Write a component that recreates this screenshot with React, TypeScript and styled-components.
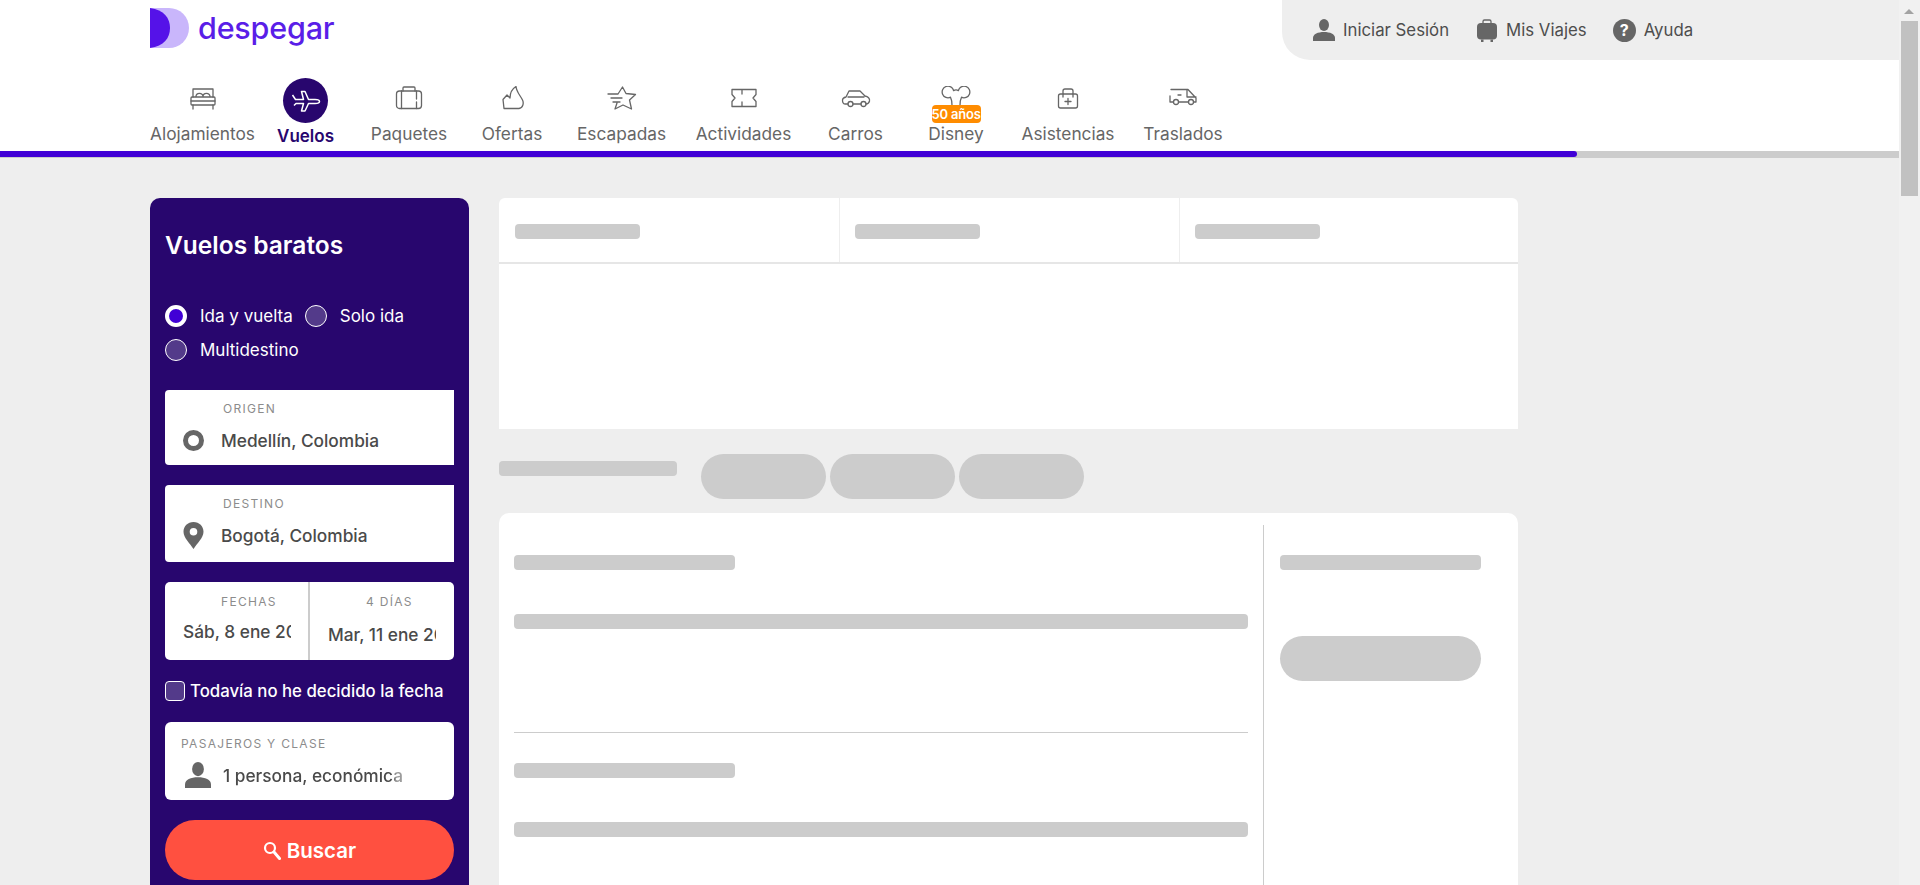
import React from "react";
import styled, { createGlobalStyle } from "styled-components";

const GlobalStyle = createGlobalStyle`
  html {
    scrollbar-width: none;
  }

  body {
    margin: 0;
    background: #eeeeee;
    font-family: Inter, "Noto Sans", "Liberation Sans", sans-serif;
    overflow-x: hidden;
  }

  * {
    box-sizing: border-box;
  }
`;

const Page = styled.div`
  width: calc(100vw - 21px);
  min-height: 100vh;
  background: #eeeeee;
`;

const Header = styled.header`
  background: #ffffff;
`;

const TopRow = styled.div`
  display: flex;
  justify-content: space-between;
  height: 60px;
  padding-left: 150px;
`;

const Logo = styled.a`
  display: flex;
  align-items: flex-start;
  gap: 9px;
  padding-top: 8px;
`;

const LogoText = styled.span`
  margin-top: 2px;
  color: #5a1ee8;
  font-size: 30.5px;
  line-height: 36px;
  font-weight: 500;
  letter-spacing: -0.2px;
`;

const UserPanel = styled.div`
  display: flex;
  align-items: center;
  width: 617px;
  padding-left: 31px;
  background: #eeeeee;
  border-bottom-left-radius: 28px;
`;

const UserLink = styled.a<{ $gap: number }>`
  display: flex;
  align-items: center;
  gap: 8px;
  margin-right: ${(p) => p.$gap}px;
  color: #4d4d4d;
  font-size: 16.8px;
`;

const HelpIcon = styled.span`
  display: flex;
  align-items: center;
  justify-content: center;
  width: 23px;
  height: 23px;
  border-radius: 50%;
  background: #666666;
  color: #ffffff;
  font-size: 16px;
  font-weight: 700;
`;

const Nav = styled.nav`
  display: flex;
  height: 91px;
  padding-left: 150px;
`;

const NavItem = styled.a<{ $width: number }>`
  display: flex;
  flex-direction: column;
  align-items: center;
  width: ${(p) => p.$width}px;
  padding-top: 18px;
`;

const IconSlot = styled.span<{ $active?: boolean }>`
  position: relative;
  display: flex;
  justify-content: center;
  align-items: ${(p) => (p.$active ? "center" : "flex-start")};
  width: 45px;
  height: 45px;
  padding-top: ${(p) => (p.$active ? 0 : 8)}px;
  border-radius: 50%;
  background: ${(p) => (p.$active ? "#28066e" : "transparent")};
`;

const NavLabel = styled.span<{ $active?: boolean }>`
  margin-top: ${(p) => (p.$active ? 3 : 1)}px;
  color: ${(p) => (p.$active ? "#28066e" : "#666666")};
  font-size: ${(p) => (p.$active ? 17 : 17.3)}px;
  line-height: 20px;
  font-weight: ${(p) => (p.$active ? 600 : 400)};
  white-space: nowrap;
`;

const NavBadge = styled.span`
  position: absolute;
  left: -2px;
  top: 27px;
  width: 49px;
  height: 18px;
  border-radius: 4px;
  background: #ff8c00;
  color: #ffffff;
  font-size: 13px;
  line-height: 18px;
  font-weight: 600;
  letter-spacing: -0.2px;
  text-align: center;
  white-space: nowrap;
`;

const LineIcon = styled.svg`
  flex: none;
  fill: none;
  stroke: #666666;
  stroke-width: 1.3;
  stroke-linecap: round;
  stroke-linejoin: round;
`;

const Progress = styled.div`
  height: 7px;
  background: #cccccc;
`;

const ProgressFill = styled.div`
  height: 6px;
  border-radius: 0 3px 3px 0;
  background: #4100d6;
`;

const Main = styled.main`
  display: flex;
  align-items: flex-start;
  gap: 30px;
  padding: 40px 0 0 150px;
`;

const Sidebar = styled.aside`
  flex: none;
  width: 319px;
  padding: 32px 15px 30px;
  border-radius: 10px 10px 0 0;
  background: #28066e;
`;

const SidebarTitle = styled.h1`
  margin: 0;
  color: #ffffff;
  font-size: 24.5px;
  line-height: 30px;
  font-weight: 600;
`;

const RadioGroup = styled.div`
  display: flex;
  flex-wrap: wrap;
  gap: 10px 12px;
  margin-top: 44px;
`;

const RadioItem = styled.label`
  display: flex;
  align-items: center;
  gap: 13px;
  height: 24px;
  color: #ffffff;
  font-size: 17px;
  white-space: nowrap;
`;

const RadioMark = styled.span<{ $checked?: boolean }>`
  width: 22px;
  height: 22px;
  border-radius: 50%;
  border: ${(p) => (p.$checked ? "4px solid #ffffff" : "1px solid #ffffff")};
  background: ${(p) => (p.$checked ? "#4100d6" : "#533a8a")};
`;

const Field = styled.div<{ $height: number; $mt: number }>`
  height: ${(p) => p.$height}px;
  margin-top: ${(p) => p.$mt}px;
  padding-top: 11px;
  border-radius: 4px 0 0 4px;
  background: #ffffff;
`;

const FieldLabel = styled.div<{ $indent: number }>`
  margin-left: ${(p) => p.$indent}px;
  color: #8c8c8c;
  font-size: 12px;
  line-height: 16px;
  letter-spacing: 1.3px;
  white-space: nowrap;
`;

const FieldRow = styled.div`
  display: flex;
  align-items: center;
  gap: 17px;
  height: 28px;
  margin: 9px 0 0 18px;
`;

const FieldValue = styled.div`
  color: #4a4a4a;
  font-size: 17.3px;
  font-weight: 500;
  white-space: nowrap;
`;

const DateBox = styled.div`
  display: grid;
  grid-template-columns: 143px 146px;
  height: 78px;
  margin-top: 20px;
  border-radius: 5px;
  background: #ffffff;
`;

const DateCell = styled.div<{ $right?: boolean }>`
  padding: 12px 0 0 18px;
  border-left: ${(p) => (p.$right ? "2px solid #cccccc" : "none")};
`;

const DateValue = styled(FieldValue)<{ $mt: number }>`
  width: 108px;
  margin-top: ${(p) => p.$mt}px;
  line-height: 24px;
  overflow: hidden;
`;

const CheckRow = styled.label`
  display: flex;
  align-items: center;
  gap: 5px;
  height: 20px;
  margin-top: 21px;
  color: #ffffff;
  font-size: 16.8px;
  font-weight: 500;
  white-space: nowrap;
`;

const CheckMark = styled.span`
  flex: none;
  width: 20px;
  height: 20px;
  border: 1px solid #ffffff;
  border-radius: 4px;
  background: #533a8a;
`;

const PassengerBox = styled.div`
  height: 78px;
  margin-top: 21px;
  padding-top: 14px;
  border-radius: 6px;
  background: #ffffff;
`;

const PassengerRow = styled.div`
  display: flex;
  align-items: center;
  gap: 12px;
  height: 26px;
  margin: 10px 0 0 20px;
`;

const PassengerValue = styled(FieldValue)`
  -webkit-mask-image: linear-gradient(90deg, #000 170px, rgba(0, 0, 0, 0.55) 173px);
  mask-image: linear-gradient(90deg, #000 170px, rgba(0, 0, 0, 0.55) 173px);
`;

const SearchButton = styled.button`
  display: flex;
  align-items: center;
  justify-content: center;
  gap: 6px;
  width: 100%;
  height: 60px;
  margin-top: 20px;
  border: none;
  border-radius: 30px;
  background: #ff5040;
  color: #ffffff;
  font-family: inherit;
  font-size: 20.5px;
  font-weight: 600;
`;

const Content = styled.section`
  flex: none;
  width: 1019px;
`;

const TopCard = styled.div`
  height: 231px;
  border-radius: 6px 6px 0 0;
  background: #ffffff;
`;

const Tabs = styled.div`
  display: grid;
  grid-template-columns: 340px 340px 339px;
  height: 66px;
  border-bottom: 2px solid #e6e6e6;
`;

const Tab = styled.div<{ $first?: boolean }>`
  padding: 26px 0 0 ${(p) => (p.$first ? 16 : 15)}px;
  border-left: ${(p) => (p.$first ? "none" : "1px solid #eeeeee")};
`;

const Bar = styled.div<{ $width: string; $mt?: number }>`
  width: ${(p) => p.$width};
  height: 15px;
  margin-top: ${(p) => p.$mt ?? 0}px;
  border-radius: 4px;
  background: #cccccc;
`;

const Pill = styled.div<{ $width: number; $mt?: number }>`
  flex: none;
  width: ${(p) => p.$width}px;
  height: 45px;
  margin-top: ${(p) => p.$mt ?? 0}px;
  border-radius: 23px;
  background: #cccccc;
`;

const FilterRow = styled.div`
  display: flex;
  align-items: flex-start;
  gap: 4px;
  margin-top: 25px;
`;

const FilterTitle = styled.div`
  flex: none;
  width: 198px;
  padding-top: 7px;
`;

const ResultCard = styled.div`
  display: flex;
  margin-top: 14px;
  padding: 12px 0 0 15px;
  border-radius: 10px 10px 0 0;
  background: #ffffff;
`;

const ResultMain = styled.div`
  flex: none;
  width: 734px;
`;

const ResultRow = styled.div`
  padding: 30px 0 103px;
  border-bottom: 1px solid #cccccc;

  &:last-child {
    border-bottom: none;
  }
`;

const ResultSide = styled.div`
  flex: none;
  width: 218px;
  margin-left: 15px;
  padding: 30px 0 0 16px;
  border-left: 1px solid #cccccc;
`;

const ScrollTrack = styled.div`
  position: fixed;
  top: 0;
  right: 0;
  bottom: 0;
  width: 21px;
  background: #f1f1f1;
`;

const ScrollArrow = styled.div`
  position: absolute;
  top: 9px;
  left: 5px;
  width: 0;
  height: 0;
  border-left: 5.5px solid transparent;
  border-right: 5.5px solid transparent;
  border-bottom: 5px solid #a3a3a3;
`;

const ScrollThumb = styled.div`
  position: absolute;
  top: 21px;
  left: 2px;
  width: 17px;
  height: 175px;
  background: #c1c1c1;
`;

const navItems = [
  {
    label: "Alojamientos",
    width: 105,
    art: (
      <>
        <path d="M5 11V3h20v8" />
        <path d="M8 10.500a3.500 3.200 0 0 1 7 0M15 10.500a3.500 3.200 0 0 1 7 0" />
        <rect x="3" y="11" width="24" height="8" rx="1" />
        <path d="M3 15h24M5 19v4M25 19v4" />
      </>
    ),
  },
  {
    label: "Vuelos",
    width: 101,
    active: true,
  },
  {
    label: "Paquetes",
    width: 106,
    art: (
      <>
        <rect x="2.500" y="5" width="25" height="17.500" rx="3" />
        <path d="M9 5V2a1 1 0 0 1 1-1h10a1 1 0 0 1 1 1v3M7.500 5v17.500M22.500 5v8M22.500 16v6.500" />
      </>
    ),
  },
  {
    label: "Ofertas",
    width: 100,
    art: (
      <path d="M19 .5C15 3 13 6 13 12l-3-3-4 4.500 1 9h15c4-.5 5-5.500 3.500-8.500C23 9 19.500 6 19 .5z" />
    ),
  },
  {
    label: "Escapadas",
    width: 119,
    art: (
      <path d="M11 8l4.500-7L19 7.500l9.500 1-6 5.500 2 9-8.500-4-8 4 2-6M1 8h10M4 12h11M6 16h7" />
    ),
  },
  {
    label: "Actividades",
    width: 125,
    art: (
      <path d="M3 3.500h24v5L24 12l3 3.500v5H3v-5L6 12 3 8.500zM13 3.500V8M13 16v4.500" />
    ),
  },
  {
    label: "Carros",
    width: 99,
    art: (
      <>
        <path d="M7 18H4c-2 0-2.500-2-2.500-4s1.500-2.500 3.500-3l3-6h11l5 5c3 .5 5 2.500 4.500 5-.5 2-1.500 3-3.500 3M12 18h8M7 11h16" />
        <circle cx="9.500" cy="18" r="2.500" />
        <circle cx="22.500" cy="18" r="2.500" />
      </>
    ),
  },
  {
    label: "Disney",
    width: 102,
    badge: "50 años",
    art: (
      <path d="M9.500 11.200A5.800 5.800 0 1 1 12.600 4.600c1.600-1 3.200-1 4.800 0A5.800 5.800 0 1 1 20.500 11.200c-1 2-1.500 4-1.500 8M9.500 11.200c1 2 1.500 4 1.500 8" />
    ),
  },
  {
    label: "Asistencias",
    width: 122,
    art: (
      <>
        <path d="M10 8H7.500a2 2 0 0 0-2 2v10a2 2 0 0 0 2 2h15a2 2 0 0 0 2-2V10a2 2 0 0 0-2-2H20" />
        <path d="M10 11V5a2 2 0 0 1 2-2h6a2 2 0 0 1 2 2v6M10 8h10M15 12.500v6M12 15.500h6" />
      </>
    ),
  },
  {
    label: "Traslados",
    width: 108,
    art: (
      <>
        <path d="M3 3.500h17L28 12v4h-2M5.500 16H2v-6M11 16h9.500M19 3.500V11h9M10 9h3" />
        <circle cx="8" cy="16" r="2.500" />
        <circle cx="23" cy="16" r="2.500" />
      </>
    ),
  },
];

function PersonIcon({ size = 22 }: { size?: number }) {
  return (
    <svg width={size} height={size} viewBox="0 0 22 22" fill="#666666">
      <ellipse cx="11" cy="6" rx="5" ry="6" />
      <path d="M0 22v-3c0-4 5-6 11-6s11 2 11 6v3z" />
    </svg>
  );
}

function SkeletonRows({ rows }: { rows: number }) {
  return (
    <>
      {Array.from({ length: rows }).map((_, i) => (
        <ResultRow key={i}>
          <Bar $width="221px" />
          <Bar $width="100%" $mt={44} />
        </ResultRow>
      ))}
    </>
  );
}

export default function App() {
  return (
    <Page>
      <GlobalStyle />
      <Header>
        <TopRow>
          <Logo>
            <svg width="39" height="40" viewBox="0 0 39 40">
              <path d="M0 0h19a20 20 0 0 1 0 40H0z" fill="#c9b6fb" />
              <path d="M0 0c14 2 20 10 20 20S14 38 0 40z" fill="#5512e8" />
            </svg>
            <LogoText>despegar</LogoText>
          </Logo>
          <UserPanel>
            <UserLink $gap={27}>
              <PersonIcon />
              Iniciar Sesión
            </UserLink>
            <UserLink $gap={26}>
              <svg width="22" height="23" viewBox="0 0 22 23" fill="#666666">
                <path
                  d="M7 5V2.500A1.500 1.500 0 0 1 8.500 1h5A1.500 1.500 0 0 1 15 2.500V5"
                  fill="none"
                  stroke="#666666"
                  strokeWidth="1.300"
                />
                <rect x="1" y="4" width="20" height="16.500" rx="4" />
                <path d="M5 20.500h2.500V23H5zM14.500 20.500H17V23h-2.500z" />
              </svg>
              Mis Viajes
            </UserLink>
            <UserLink $gap={0}>
              <HelpIcon>?</HelpIcon>
              Ayuda
            </UserLink>
          </UserPanel>
        </TopRow>
        <Nav>
          {navItems.map((item) => (
            <NavItem key={item.label} $width={item.width}>
              <IconSlot $active={item.active}>
                {item.active ? (
                  <svg width="30" height="22" viewBox="0 0 30 22" fill="none" stroke="#ffffff" strokeWidth="1.500" strokeLinejoin="round">
                    <path d="M1.500 5l3 4.500h8L10.500 1.500h3.500l3.500 8h6.500c3 0 4.500 1 4.500 2s-1.500 2-4.500 2h-6.500l-3.500 7.500h-3.500l2-7.500H5l-2 2" />
                  </svg>
                ) : (
                  <LineIcon width={34} height={24} viewBox="-2 0 34 24">
                    {item.art}
                  </LineIcon>
                )}
                {item.badge && <NavBadge>{item.badge}</NavBadge>}
              </IconSlot>
              <NavLabel $active={item.active}>{item.label}</NavLabel>
            </NavItem>
          ))}
        </Nav>
        <Progress>
          <ProgressFill style={{ width: `${(1577 / 1899) * 100}%` }} />
        </Progress>
      </Header>

      <Main>
        <Sidebar>
          <SidebarTitle>Vuelos baratos</SidebarTitle>
          <RadioGroup>
            <RadioItem>
              <RadioMark $checked />
              Ida y vuelta
            </RadioItem>
            <RadioItem>
              <RadioMark />
              Solo ida
            </RadioItem>
            <RadioItem>
              <RadioMark />
              Multidestino
            </RadioItem>
          </RadioGroup>

          <Field $height={75} $mt={28}>
            <FieldLabel $indent={58}>ORIGEN</FieldLabel>
            <FieldRow>
              <svg width="21" height="21" viewBox="0 0 21 21">
                <circle cx="10.500" cy="10.500" r="8" fill="none" stroke="#666666" strokeWidth="5" />
              </svg>
              <FieldValue>Medellín, Colombia</FieldValue>
            </FieldRow>
          </Field>

          <Field $height={77} $mt={20}>
            <FieldLabel $indent={58}>DESTINO</FieldLabel>
            <FieldRow>
              <svg width="21" height="27" viewBox="0 0 21 27" fill="#666666">
                <path
                  fillRule="evenodd"
                  d="M10.500 0C4.700 0 .5 4.300.5 9.800c0 6 6.500 11.700 10 17.200 3.500-5.500 10-11.200 10-17.200C20.500 4.300 16.300 0 10.500 0zm0 6a3.800 3.800 0 1 1 0 7.600 3.800 3.800 0 0 1 0-7.600z"
                />
              </svg>
              <FieldValue>Bogotá, Colombia</FieldValue>
            </FieldRow>
          </Field>

          <DateBox>
            <DateCell>
              <FieldLabel $indent={38}>FECHAS</FieldLabel>
              <DateValue $mt={10}>Sáb, 8 ene 2022</DateValue>
            </DateCell>
            <DateCell $right>
              <FieldLabel $indent={38}>4 DÍAS</FieldLabel>
              <DateValue $mt={13}>Mar, 11 ene 2022</DateValue>
            </DateCell>
          </DateBox>

          <CheckRow>
            <CheckMark />
            Todavía no he decidido la fecha
          </CheckRow>

          <PassengerBox>
            <FieldLabel $indent={16}>PASAJEROS Y CLASE</FieldLabel>
            <PassengerRow>
              <PersonIcon size={26} />
              <PassengerValue>1 persona, económica</PassengerValue>
            </PassengerRow>
          </PassengerBox>

          <SearchButton>
            <svg width="18" height="19" viewBox="0 0 18 19" fill="none" stroke="#ffffff">
              <circle cx="7" cy="7" r="5" strokeWidth="2.200" />
              <path d="M11 11l5.500 6.500" strokeWidth="3" strokeLinecap="round" />
            </svg>
            Buscar
          </SearchButton>
        </Sidebar>

        <Content>
          <TopCard>
            <Tabs>
              <Tab $first>
                <Bar $width="125px" />
              </Tab>
              <Tab>
                <Bar $width="125px" />
              </Tab>
              <Tab>
                <Bar $width="125px" />
              </Tab>
            </Tabs>
          </TopCard>

          <FilterRow>
            <FilterTitle>
              <Bar $width="178px" />
            </FilterTitle>
            <Pill $width={125} />
            <Pill $width={125} />
            <Pill $width={125} />
          </FilterRow>

          <ResultCard>
            <ResultMain>
              <SkeletonRows rows={3} />
            </ResultMain>
            <ResultSide>
              <Bar $width="201px" />
              <Pill $width={201} $mt={66} />
            </ResultSide>
          </ResultCard>
        </Content>
      </Main>

      <ScrollTrack>
        <ScrollArrow />
        <ScrollThumb />
      </ScrollTrack>
    </Page>
  );
}
